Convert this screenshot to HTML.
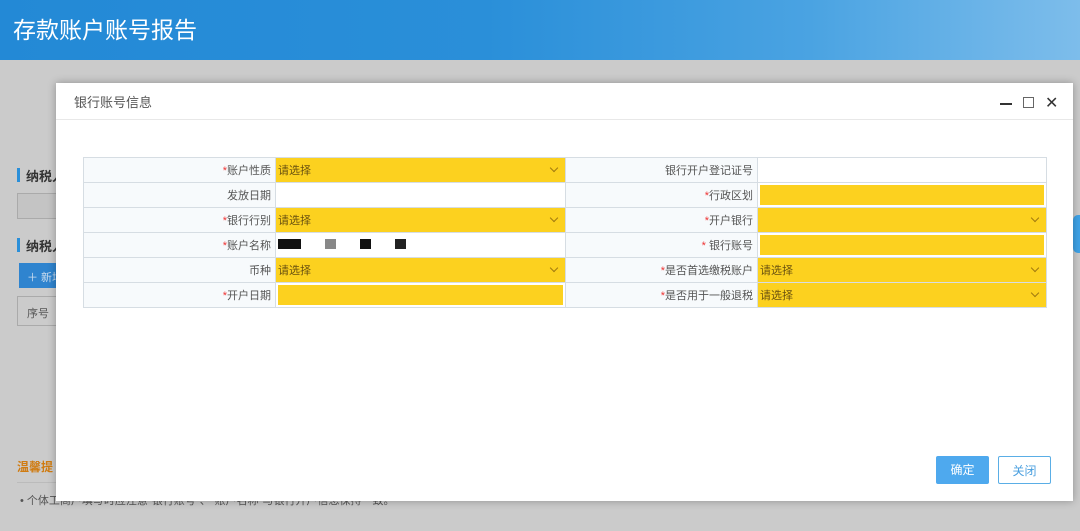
<!DOCTYPE html>
<html><head><meta charset="utf-8"><style>
*{margin:0;padding:0;box-sizing:border-box}
body{width:1080px;height:531px;overflow:hidden;background:#cbcbcb;font-family:"Liberation Sans","Noto Sans CJK SC",sans-serif;position:relative}
.hdr{position:absolute;left:0;top:0;width:1080px;height:60px;background:linear-gradient(90deg,#2389d6 0%,#2a8fd9 45%,#4aa3e2 75%,#7dbdeb 100%)}
.hdr span{position:absolute;left:13px;top:11px;color:#fff;font-size:23px}
.abs{position:absolute}
.modal{position:absolute;left:56px;top:83px;width:1017px;height:418px;background:#fff;box-shadow:0 0 8px rgba(0,0,0,.3)}
.mt{height:37px;border-bottom:1px solid #e8e8e8;font-size:13px;color:#555;padding:9px 0 0 18px}
table{position:absolute;left:27px;top:74px;border-collapse:collapse;font-size:11px}
td{border:1px solid #d6dde3;height:25px;padding:0}
td.l{background:#f7fafc;text-align:right;padding-right:4px;color:#555}
td.l i{color:#e33;font-style:normal}
td.y{background:#fcd11f;color:#6a5210;position:relative;padding-left:2px}
td.yi{background:#fff;padding:2px}
td.yi div{background:#fcd11f;height:20px}
td.w{background:#fff}
.ar{position:absolute;right:8px;top:7px;width:6px;height:6px;border-right:1.5px solid #a07a10;border-bottom:1.5px solid #a07a10;transform:rotate(45deg)}
.btn{position:absolute;top:373px;height:28px;font-size:12px;text-align:center;line-height:28px;border-radius:2px}
</style></head><body>
<div class="hdr"><span>存款账户账号报告</span></div>
<div class="abs" style="left:17px;top:168px;width:3px;height:14px;background:#2a8fd9"></div>
<div class="abs" style="left:26px;top:166px;font-size:13px;font-weight:bold;color:#333">纳税人</div>
<div class="abs" style="left:17px;top:193px;width:45px;height:26px;border:1px solid #aaa;background:#c4c4c4"></div>
<div class="abs" style="left:17px;top:238px;width:3px;height:14px;background:#2a8fd9"></div>
<div class="abs" style="left:26px;top:236px;font-size:13px;font-weight:bold;color:#333">纳税人</div>
<div class="abs" style="left:19px;top:263px;width:45px;height:25px;background:#2f84cf;color:#cde;font-size:11px;padding:6px 0 0 8px">＋ 新增</div>
<div class="abs" style="left:17px;top:296px;width:45px;height:30px;border:1px solid #aaa;font-size:11px;color:#555;padding:8px 0 0 9px">序号</div>
<div class="abs" style="left:17px;top:458px;font-size:12px;color:#d07b10;font-weight:bold">温馨提</div>
<div class="abs" style="left:17px;top:482px;width:1000px;height:1px;background:#bbb"></div>
<div class="abs" style="left:20px;top:492px;font-size:11px;color:#555">• 个体工商户填写时应注意"银行账号"、"账户名称"与银行开户信息保持一致。</div>
<div class="abs" style="left:1073px;top:215px;width:7px;height:38px;background:#3ea3e8;border-radius:5px 0 0 5px"></div>
<div class="modal">
<div class="mt">银行账号信息</div>
<div class="abs" style="left:944px;top:20px;width:12px;height:2px;background:#333"></div>
<div class="abs" style="left:967px;top:14px;width:11px;height:11px;border:1px solid #666"></div>
<div class="abs" style="left:989px;top:10px;font-size:16px;color:#333">✕</div>
<table>
<tr><td class="l" style="width:192px"><i>*</i>账户性质</td><td class="y" style="width:290px">请选择<span class="ar"></span></td><td class="l" style="width:192px">银行开户登记证号</td><td class="w" style="width:289px"></td></tr>
<tr><td class="l">发放日期</td><td class="w"></td><td class="l"><i>*</i>行政区划</td><td class="yi"><div></div></td></tr>
<tr><td class="l"><i>*</i>银行行别</td><td class="y">请选择<span class="ar"></span></td><td class="l"><i>*</i>开户银行</td><td class="y"><span class="ar"></span></td></tr>
<tr><td class="l"><i>*</i>账户名称</td><td class="w"><span style="display:inline-block;width:23px;height:10px;background:#111;margin-left:2px"></span><span style="display:inline-block;width:11px;height:10px;background:#888;margin-left:24px"></span><span style="display:inline-block;width:11px;height:10px;background:#111;margin-left:24px"></span><span style="display:inline-block;width:11px;height:10px;background:#222;margin-left:24px"></span></td><td class="l"><i>*</i> 银行账号</td><td class="yi"><div></div></td></tr>
<tr><td class="l">币种</td><td class="y">请选择<span class="ar"></span></td><td class="l"><i>*</i>是否首选缴税账户</td><td class="y">请选择<span class="ar"></span></td></tr>
<tr><td class="l"><i>*</i>开户日期</td><td class="yi"><div></div></td><td class="l"><i>*</i>是否用于一般退税</td><td class="y">请选择<span class="ar"></span></td></tr>
</table>
<div class="btn" style="left:880px;width:53px;background:#4ea9ee;color:#fff">确定</div>
<div class="btn" style="left:942px;width:53px;border:1px solid #5aaee6;color:#4a9fdf;background:#fff">关闭</div>
</div>
</body></html>
